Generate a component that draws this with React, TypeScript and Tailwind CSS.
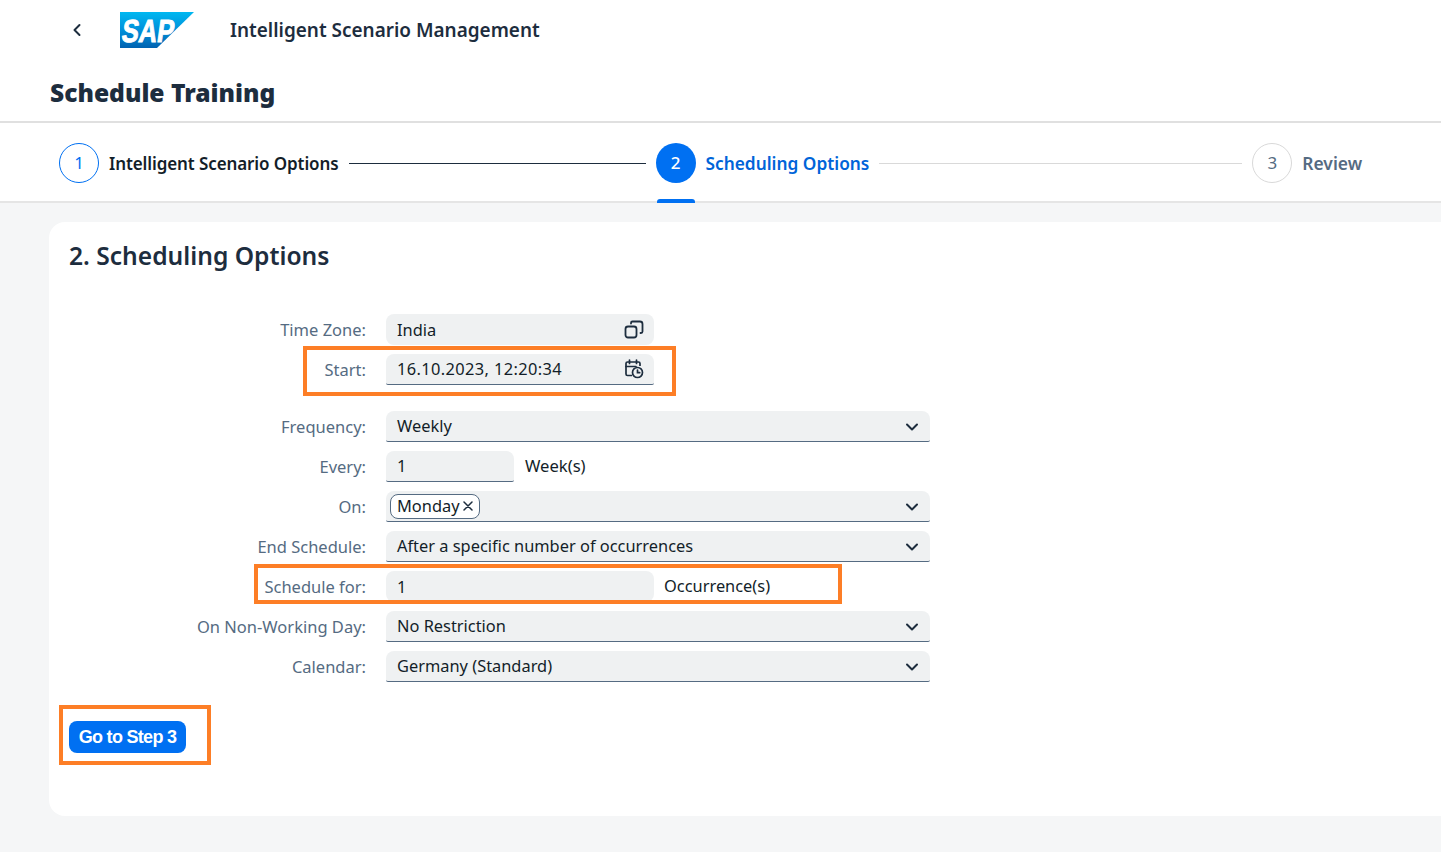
import React from "react";

const font = { fontFamily: '"Noto Sans", "Open Sans", sans-serif' };

function Chevron() {
  return (
    <svg width="14" height="14" viewBox="0 0 14 14" fill="none" className="mr-[11px] mt-[1px] shrink-0">
      <path d="M2 4.5 7 9.5 12 4.5" stroke="#1d2d3e" strokeWidth="2" strokeLinecap="round" strokeLinejoin="round" />
    </svg>
  );
}

function Label({ children }: { children: React.ReactNode }) {
  return <div className="w-[337px] pr-[20px] text-right text-[16.5px] text-[#556b82] shrink-0 pt-[1px]">{children}</div>;
}

function Field({ w, text, icon, children, line = true, textClass = "" }: { w: string; text?: string; icon?: React.ReactNode; children?: React.ReactNode; line?: boolean; textClass?: string }) {
  return (
    <div className={`${w} h-[31px] flex items-center justify-between rounded-t-[8px] rounded-b-[2px] bg-[#eff1f2] text-[16.4px] text-[#131e29] pl-[11px] ${line ? "border-b border-[#556b82]" : "rounded-b-[8px]"}`}>
      {children ?? <span className={`pt-[1px] ${textClass}`}>{text}</span>}
      {icon}
    </div>
  );
}

function Row({ label, children, className = "" }: { label: string; children: React.ReactNode; className?: string }) {
  return (
    <div className={`flex items-center h-[31px] ${className}`}>
      <Label>{label}</Label>
      {children}
    </div>
  );
}

function StepCircle({ n, kind }: { n: string; kind: "done" | "active" | "todo" }) {
  const cls =
    kind === "active"
      ? "bg-[#0070f2] text-white font-medium"
      : kind === "done"
      ? "border border-[#0070f2] text-[#0070f2] bg-white"
      : "border border-[#d9d9d9] text-[#556b82] bg-white";
  return <div className={`w-[40px] h-[40px] rounded-full flex items-center justify-center text-[17px] shrink-0 ${cls}`}>{n}</div>;
}

function Overlay({ className }: { className: string }) {
  return <div className={`absolute border-[4px] border-[#fd7e26] pointer-events-none ${className}`} />;
}

export default function App() {
  return (
    <div style={font} className="relative w-[1441px] h-[852px] overflow-hidden bg-[#f5f6f7]">
      <header className="h-[123px] bg-white border-b-2 border-[#e0e0e0] flex flex-col">
        <div className="h-[61px] flex items-center pl-[70px]">
          <svg width="14" height="16" viewBox="0 0 14 16" fill="none" className="mt-[-1px]">
            <path d="M9.5 3 4.5 8 9.5 13" stroke="#1d2d3e" strokeWidth="2" strokeLinecap="round" strokeLinejoin="round" />
          </svg>
          <svg width="74" height="36" viewBox="0 0 74 36" className="ml-[36px] mt-[-1px]">
            <defs>
              <linearGradient id="sap" x1="0" y1="0" x2="0" y2="1">
                <stop offset="0" stopColor="#00b8f1" />
                <stop offset="0.5" stopColor="#0090da" />
                <stop offset="1" stopColor="#0062b0" />
              </linearGradient>
            </defs>
            <polygon points="0,0 74,0 37,36 0,36" fill="url(#sap)" />
            <text x="1" y="30" transform="skewX(-8) translate(4 0)" fill="#fff" stroke="#fff" strokeWidth="1" fontSize="32" fontWeight="700" textLength="52" lengthAdjust="spacingAndGlyphs" style={{ fontFamily: '"Liberation Sans", sans-serif' }}>SAP</text>
          </svg>
          <div className="ml-[36px] text-[18.95px] font-semibold text-[#1d2d3e] leading-none mt-[-1px] whitespace-nowrap">Intelligent Scenario Management</div>
        </div>
        <div className="pl-[50px] pt-[12px] text-[24.6px] font-black text-[#1d2d3e] leading-[40px]">Schedule Training</div>
      </header>

      <nav className="relative h-[80px] bg-white border-b-2 border-[#e5e5e5] flex items-center pl-[59px] pt-[2px]">
        <StepCircle n="1" kind="done" />
        <span className="ml-[10px] pt-[2px] text-[17px] font-semibold text-[#131e29] tracking-[-0.1px] whitespace-nowrap">Intelligent Scenario Options</span>
        <div className="ml-[10px] mr-[10px] w-[297px] h-px bg-[#1d2d3e]" />
        <StepCircle n="2" kind="active" />
        <span className="ml-[10px] pt-[2px] text-[17.3px] font-semibold text-[#0064d9] whitespace-nowrap">Scheduling Options</span>
        <div className="mx-[10px] w-[363px] h-px bg-[#d9d9d9]" />
        <StepCircle n="3" kind="todo" />
        <span className="ml-[10px] text-[17.4px] font-semibold text-[#556b82] whitespace-nowrap">Review</span>
        <div className="absolute left-[657px] bottom-[-2px] w-[38px] h-[4px] rounded-t-[3px] bg-[#0070f2]" />
      </nav>

      <main className="ml-[49px] mt-[19px] h-[594px] rounded-l-[16px] bg-white pt-[17px]">
        <h2 className="pl-[20px] text-[24.6px] font-semibold leading-[33px] text-[#1d2d3e]">2. Scheduling Options</h2>

        <div className="mt-[42px] flex flex-col">
          <Row label="Time Zone:">
            <Field w="w-[268px]" text="India" line={false} icon={
              <svg width="20" height="20" viewBox="0 0 20 20" fill="none" stroke="#1d2d3e" strokeWidth="1.8" className="mr-[10px]">
                <rect x="1.5" y="6.5" width="11" height="11" rx="2.5" />
                <path d="M7 3.5V3a1.5 1.5 0 0 1 1.5-1.5H16A2.5 2.5 0 0 1 18.5 4v7.5A1.5 1.5 0 0 1 17 13h-.5" strokeLinecap="round" />
              </svg>
            } />
          </Row>
          <Row label="Start:" className="mt-[9px]">
            <Field w="w-[268px]" text="16.10.2023, 12:20:34" textClass="tracking-[0.38px]" icon={
              <svg width="20" height="20" viewBox="0 0 20 20" fill="none" stroke="#1d2d3e" strokeWidth="1.7" className="mr-[10px]">
                <path d="M8 16.5H3.5A1.5 1.5 0 0 1 2 15V4.5A1.5 1.5 0 0 1 3.5 3h11A1.5 1.5 0 0 1 16 4.5V7" />
                <path d="M2 7.5h10M5.5 1v3.5M12.5 1v3.5" strokeLinecap="round" />
                <circle cx="13.5" cy="13.5" r="5" />
                <path d="M13.5 11v2.7h2.2" strokeLinecap="round" />
              </svg>
            } />
          </Row>
          <Row label="Frequency:" className="mt-[26px]">
            <Field w="w-[544px]" text="Weekly" icon={<Chevron />} />
          </Row>
          <Row label="Every:" className="mt-[9px]">
            <Field w="w-[128px]" text="1" />
            <span className="ml-[11px] text-[16.6px] text-[#131e29]">Week(s)</span>
          </Row>
          <Row label="On:" className="mt-[9px]">
            <Field w="w-[544px]" icon={<Chevron />}>
              <span className="ml-[-7px] h-[25px] flex items-center gap-[2px] pl-[6px] pr-[5px] rounded-[8px] border border-[#556b82] bg-white text-[#131e29] leading-none">
                Monday
                <svg width="12" height="12" viewBox="0 0 12 12" fill="none" stroke="#1d2d3e" strokeWidth="1.5"><path d="M2 2l8 8M10 2l-8 8" strokeLinecap="round" /></svg>
              </span>
            </Field>
          </Row>
          <Row label="End Schedule:" className="mt-[9px]">
            <Field w="w-[544px]" text="After a specific number of occurrences" icon={<Chevron />} />
          </Row>
          <Row label="Schedule for:" className="mt-[9px]">
            <Field w="w-[268px]" text="1" line={false} />
            <span className="ml-[10px] text-[16.4px] text-[#131e29]">Occurrence(s)</span>
          </Row>
          <Row label="On Non-Working Day:" className="mt-[9px]">
            <Field w="w-[544px]" text="No Restriction" icon={<Chevron />} />
          </Row>
          <Row label="Calendar:" className="mt-[9px]">
            <Field w="w-[544px]" text="Germany (Standard)" icon={<Chevron />} />
          </Row>
        </div>

        <button className="ml-[20px] mt-[39px] h-[32px] w-[117px] rounded-[8px] bg-[#0070f2] text-white text-[18px] font-bold tracking-[-0.7px]" style={{ fontFamily: '"Liberation Sans", sans-serif' }}>
          Go to Step 3
        </button>
      </main>

      <Overlay className="left-[303px] top-[346px] w-[373px] h-[50px]" />
      <Overlay className="left-[254px] top-[564px] w-[588px] h-[40px]" />
      <Overlay className="left-[59px] top-[705px] w-[152px] h-[60px]" />
    </div>
  );
}
